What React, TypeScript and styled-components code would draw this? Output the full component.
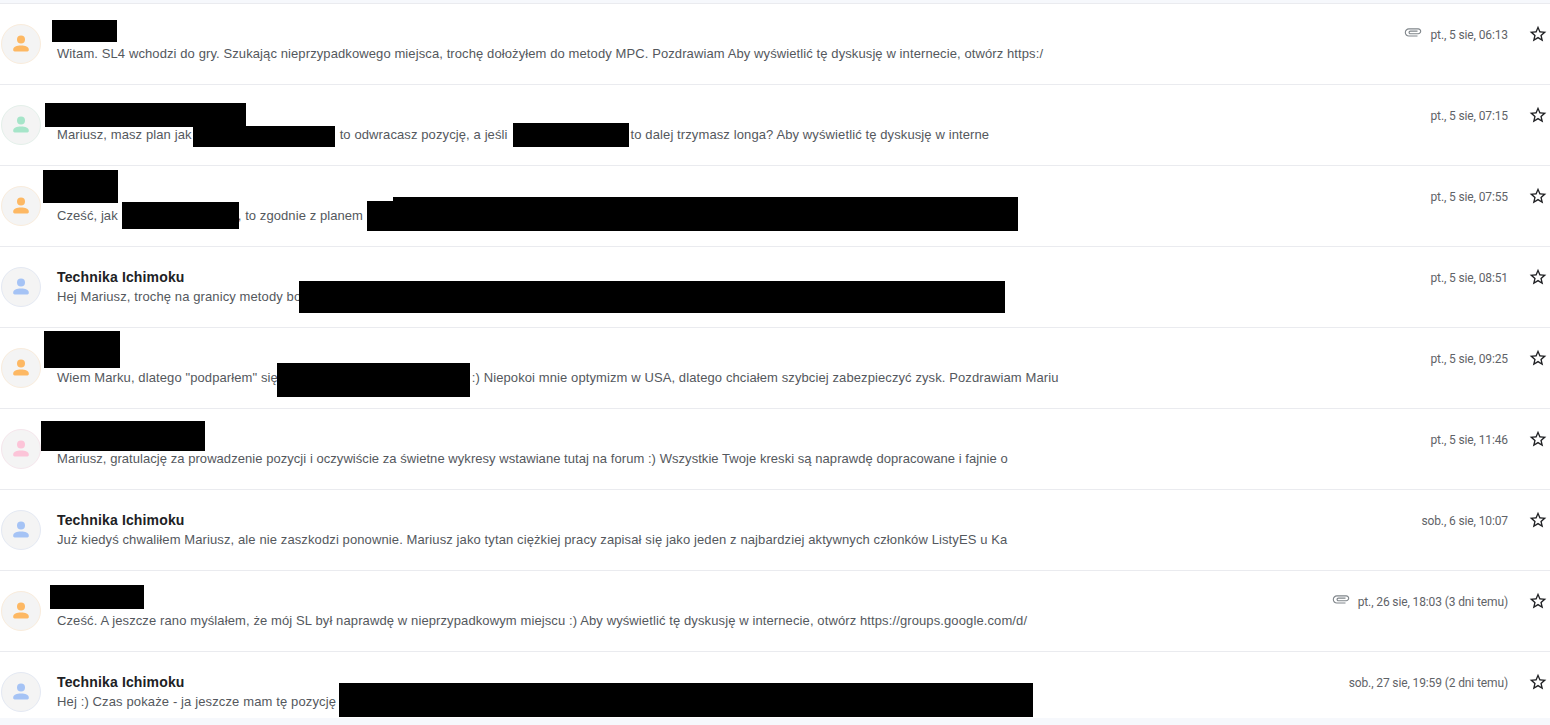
import React from "react";
import styled, { createGlobalStyle } from "styled-components";

const Global = createGlobalStyle`
  html, body { margin: 0; padding: 0; background: #fff; height: 725px; overflow: hidden; }
  #root { height: 725px; }
`;

const Page = styled.main`
  width: 1550px;
  height: 725px;
  display: flex;
  flex-direction: column;
  padding-top: 3px;
  box-sizing: border-box;
  overflow: hidden;
  background: #f6f8fc;
`;

const List = styled.ul`
  list-style: none;
  margin: 0;
  padding: 0;
  height: 715px;
  overflow: hidden;
  flex: none;
  background: #fff;
`;

const Row = styled.li`
  position: relative;
  height: 81px;
  box-sizing: border-box;
  border-top: 1px solid #eaebef;
  display: grid;
  grid-template-columns: 42px 1fr 28px;
  column-gap: 14px;
  padding-left: 1px;
`;

const Avatar = styled.div<{ $tint: string; $ring: string }>`
  width: 40px;
  height: 40px;
  margin-top: 20px;
  border-radius: 50%;
  box-sizing: border-box;
  background: #f4f4f4;
  border: 1px solid ${(p) => p.$ring};
  color: ${(p) => p.$tint};
  display: flex;
  align-items: center;
  justify-content: center;
`;

const Body = styled.div`
  display: flex;
  flex-direction: column;
  padding-top: 21px;
  min-width: 0;
`;

const TopLine = styled.div`
  display: flex;
  align-items: center;
  justify-content: space-between;
  height: 19px;
`;

const Name = styled.span`
  font: 700 14px/19px "Liberation Sans", Arial, sans-serif;
  letter-spacing: 0.15px;
  color: #202124;
`;

const Meta = styled.div`
  display: flex;
  align-items: center;
  gap: 8px;
`;

const DateText = styled.span`
  font: 400 12px/19px Roboto, "Liberation Sans", sans-serif;
  letter-spacing: -0.12px;
  position: relative;
  top: 1px;
  color: #5f6368;
`;

const Clip = styled.svg`
  width: 18px;
  height: 18px;
  margin-top: -6px;
  color: #80868b;
`;

const Snippet = styled.p<{ $track: number }>`
  margin: 0;
  font: 400 13px/20px "Liberation Sans", Arial, sans-serif;
  letter-spacing: ${(p) => p.$track}px;
  color: #54585d;
  white-space: pre;
  display: flex;
`;

const Hidden = styled.span<{ $w: number }>`
  flex: none;
  width: ${(p) => p.$w}px;
`;

const StarCell = styled.div`
  display: flex;
  justify-content: flex-start;
  padding-top: 20px;
  padding-left: 6px;
  color: #202124;
`;

const Redaction = styled.div<{ $l: number; $t: number; $w: number; $h: number }>`
  position: absolute;
  left: ${(p) => p.$l}px;
  top: ${(p) => p.$t}px;
  width: ${(p) => p.$w}px;
  height: ${(p) => p.$h}px;
  background: #000;
`;

const Band = styled.div`
  flex: 1;
  background: #f6f8fc;
`;

const PersonIcon = () => (
  <svg width="24" height="24" viewBox="0 0 24 24" fill="currentColor" aria-hidden="true">
    <circle cx="12" cy="7.5" r="4" />
    <path d="M4.2 17.6c0-2.6 3.6-4 7.8-4s7.8 1.4 7.8 4v.4c0 .9-.6 1.4-1.4 1.4H5.6c-.8 0-1.4-.5-1.4-1.4z" />
  </svg>
);

const StarIcon = () => (
  <svg width="20" height="20" viewBox="0 0 24 24" fill="currentColor" aria-hidden="true">
    <path d="M22 9.24l-7.19-.62L12 2 9.19 8.63 2 9.24l5.46 4.73L5.82 21 12 17.27 18.18 21l-1.63-7.03L22 9.24zM12 15.4l-3.76 2.27 1-4.28-3.32-2.88 4.38-.38L12 6.1l1.71 4.04 4.38.38-3.32 2.88 1 4.28L12 15.4z" />
  </svg>
);

const ClipIcon = () => (
  <Clip viewBox="0 0 24 24" fill="currentColor" aria-hidden="true">
    <path
      transform="rotate(90 12 12)"
      d="M16.5 6v11.5c0 2.21-1.79 4-4 4s-4-1.79-4-4V5c0-1.38 1.12-2.5 2.5-2.5s2.5 1.12 2.5 2.5v10.5c0 .55-.45 1-1 1s-1-.45-1-1V6H10v9.5c0 1.38 1.12 2.5 2.5 2.5s2.5-1.12 2.5-2.5V5c0-2.21-1.79-4-4-4S7 2.79 7 5v12.5c0 3.04 2.46 5.5 5.5 5.5s5.5-2.46 5.5-5.5V6h-1.5z"
    />
  </Clip>
);

const orange = { tint: "#fdb863", ring: "#f9ecdc" };
const green = { tint: "#a6e5c9", ring: "#e4f0ea" };
const pink = { tint: "#fcc4d8", ring: "#f5e6ec" };
const blue = { tint: "#a5c3f5", ring: "#e4e9f3" };

type Box = [number, number, number, number];
type Mail = {
  name?: string;
  snippet: (string | number)[];
  track: number;
  date: string;
  clip?: boolean;
  color: { tint: string; ring: string };
  boxes: Box[];
};

const mails: Mail[] = [
  {
    snippet: ["Witam. SL4 wchodzi do gry. Szukając nieprzypadkowego miejsca, trochę dołożyłem do metody MPC. Pozdrawiam Aby wyświetlić tę dyskusję w internecie, otwórz https:/"],
    track: 0.1,
    date: "pt., 5 sie, 06:13",
    clip: true,
    color: orange,
    boxes: [[52, 16, 65, 22]],
  },
  {
    snippet: ["Mariusz, masz plan jak", 148, "to odwracasz pozycję, a jeśli", 123, "to dalej trzymasz longa? Aby wyświetlić tę dyskusję w interne"],
    track: 0.11,
    date: "pt., 5 sie, 07:15",
    color: green,
    boxes: [[45, 18, 201, 24], [193, 41, 142, 21], [513, 38, 116, 24]],
  },
  {
    snippet: ["Cześć, jak", 120, ", to zgodnie z planem"],
    track: 0.08,
    date: "pt., 5 sie, 07:55",
    color: orange,
    boxes: [[43, 4, 75, 33], [122, 36, 117, 27], [367, 35, 651, 30], [393, 31, 625, 10]],
  },
  {
    name: "Technika Ichimoku",
    snippet: ["Hej Mariusz, trochę na granicy metody bo"],
    track: 0.11,
    date: "pt., 5 sie, 08:51",
    color: blue,
    boxes: [[299, 34, 706, 32]],
  },
  {
    snippet: ["Wiem Marku, dlatego \"podparłem\" się", 194, ":) Niepokoi mnie optymizm w USA, dlatego chciałem szybciej zabezpieczyć zysk. Pozdrawiam Mariu"],
    track: 0.1,
    date: "pt., 5 sie, 09:25",
    color: orange,
    boxes: [[44, 3, 76, 37], [277, 35, 193, 34]],
  },
  {
    snippet: ["Mariusz, gratulację za prowadzenie pozycji i oczywiście za świetne wykresy wstawiane tutaj na forum :) Wszystkie Twoje kreski są naprawdę dopracowane i fajnie o"],
    track: 0.05,
    date: "pt., 5 sie, 11:46",
    color: pink,
    boxes: [[41, 12, 164, 30]],
  },
  {
    name: "Technika Ichimoku",
    snippet: ["Już kiedyś chwaliłem Mariusz, ale nie zaszkodzi ponownie. Mariusz jako tytan ciężkiej pracy zapisał się jako jeden z najbardziej aktywnych członków ListyES u Ka"],
    track: 0.11,
    date: "sob., 6 sie, 10:07",
    color: blue,
    boxes: [],
  },
  {
    snippet: ["Cześć. A jeszcze rano myślałem, że mój SL był naprawdę w nieprzypadkowym miejscu :) Aby wyświetlić tę dyskusję w internecie, otwórz https://groups.google.com/d/"],
    track: 0.11,
    date: "pt., 26 sie, 18:03 (3 dni temu)",
    clip: true,
    color: orange,
    boxes: [[50, 14, 94, 24]],
  },
  {
    name: "Technika Ichimoku",
    snippet: ["Hej :) Czas pokaże - ja jeszcze mam tę pozycję"],
    track: 0.13,
    date: "sob., 27 sie, 19:59 (2 dni temu)",
    color: blue,
    boxes: [[339, 31, 694, 34]],
  },
];

export default function App() {
  return (
    <>
      <Global />
      <Page>
        <List>
          {mails.map((m, i) => (
            <Row key={i}>
              <Avatar $tint={m.color.tint} $ring={m.color.ring}>
                <PersonIcon />
              </Avatar>
              <Body>
                <TopLine>
                  <Name>{m.name ?? "\u00a0"}</Name>
                  <Meta>
                    {m.clip && <ClipIcon />}
                    <DateText>{m.date}</DateText>
                  </Meta>
                </TopLine>
                <Snippet $track={m.track}>
                  {m.snippet.map((part, k) =>
                    typeof part === "number" ? <Hidden key={k} $w={part} /> : <span key={k}>{part}</span>
                  )}
                </Snippet>
              </Body>
              <StarCell>
                <StarIcon />
              </StarCell>
              {m.boxes.map((b, j) => (
                <Redaction key={j} $l={b[0]} $t={b[1]} $w={b[2]} $h={b[3]} />
              ))}
            </Row>
          ))}
        </List>
        <Band />
      </Page>
    </>
  );
}
